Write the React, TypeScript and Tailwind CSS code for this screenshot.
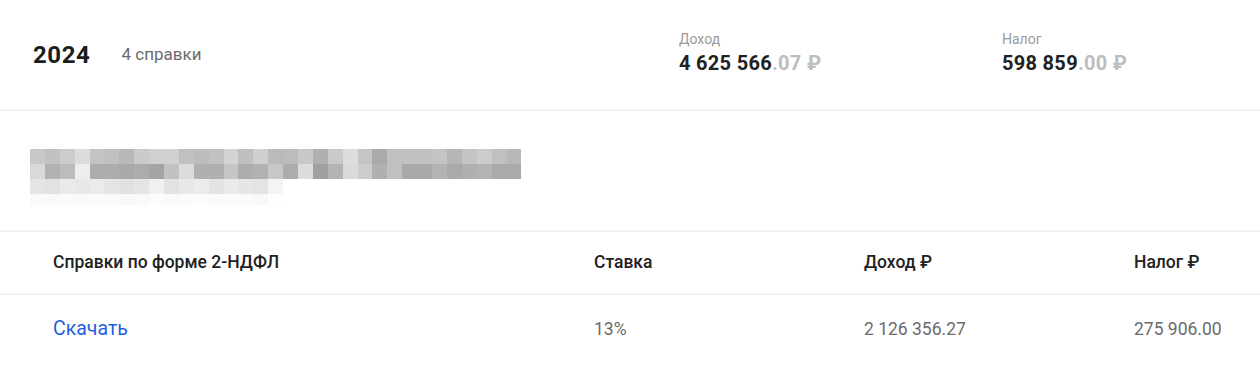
const rows: string[][] = [
  ["c8","c2","cc","dc","c4","c0","b8","cb","d0","d0","c0","bd","c2","d4","bf","cf","ba","bc","c8","b0","c9","dd","c5","aa","c0","c2","c2","c4","b6","c4","cc","c0","b8"],
  ["d9","b2","bc","ee","ad","ad","a9","ac","a4","c2","dc","b0","b0","c6","ad","b1","c7","ac","dc","a0","b4","da","cc","b0","c0","a9","a9","b3","aa","b0","b3","aa","aa"],
  ["e5","e2","ea","e8","eb","e5","e1","e4","f0","e2","e8","ec","e3","ea","e6","e4","f4"],
  ["fa","f9","fa","fa","fb","fa","f8","f9","fc","fa","fb","fc","fa","fb","fa","f8","fd"],
];

function Blur() {
  return (
    <div className="flex flex-col">
      {rows.map((r, i) => (
        <div key={i} className={`flex ${i === 3 ? "h-[11px]" : "h-[15px]"}`}>
          {r.map((c, j) => (
            <div key={j} className="h-full w-[14.9px]" style={{ backgroundColor: `#${c}${c}${c}` }} />
          ))}
        </div>
      ))}
    </div>
  );
}

function Sum({ label, main, cents }: { label: string; main: string; cents: string }) {
  return (
    <div className="flex flex-col">
      <span className="text-[14px] leading-[18px] text-[#9a9a9a]">{label}</span>
      <span className="mt-[3px] text-[20px] leading-[24px] font-bold tracking-[0.3px] text-[#222]">
        {main}
        <span className="text-[#bdbdbd]">.{cents} ₽</span>
      </span>
    </div>
  );
}

export default function App() {
  return (
    <div className="w-[1260px] h-[386px] bg-white font-['Roboto',sans-serif] text-[#222]">
      <div className="flex h-[111px] items-center border-b-2 border-[#f2f2f2]">
        <div className="flex w-[679px] items-center pl-[33px] pt-[1px]">
          <span className="text-[24px] font-bold tracking-[0.6px] text-[#1c1c1c]">2024</span>
          <span className="ml-[31px] text-[17px] text-[#6b6b6b]">4 справки</span>
        </div>
        <div className="w-[323px] mb-[4px]">
          <Sum label="Доход" main="4 625 566" cents="07" />
        </div>
        <div className="mb-[4px]">
          <Sum label="Налог" main="598 859" cents="00" />
        </div>
      </div>
      <div className="h-[121px] border-b-2 border-[#f2f2f2] pl-[30px] pt-[38px]">
        <Blur />
      </div>
      <div className="grid h-[63px] grid-cols-[541px_270px_270px_1fr] items-center border-b-2 border-[#f2f2f2] pl-[53px] text-[17.5px] font-medium text-[#222]">
        <span>Справки по форме 2-НДФЛ</span>
        <span>Ставка</span>
        <span>Доход ₽</span>
        <span>Налог ₽</span>
      </div>
      <div className="grid h-[68px] grid-cols-[541px_270px_270px_1fr] items-center pl-[53px] text-[17.5px] text-[#6b6b6b]">
        <span className="text-[19.5px] text-[#1f5fe0]">Скачать</span>
        <span>13%</span>
        <span>2 126 356.27</span>
        <span>275 906.00</span>
      </div>
    </div>
  );
}
